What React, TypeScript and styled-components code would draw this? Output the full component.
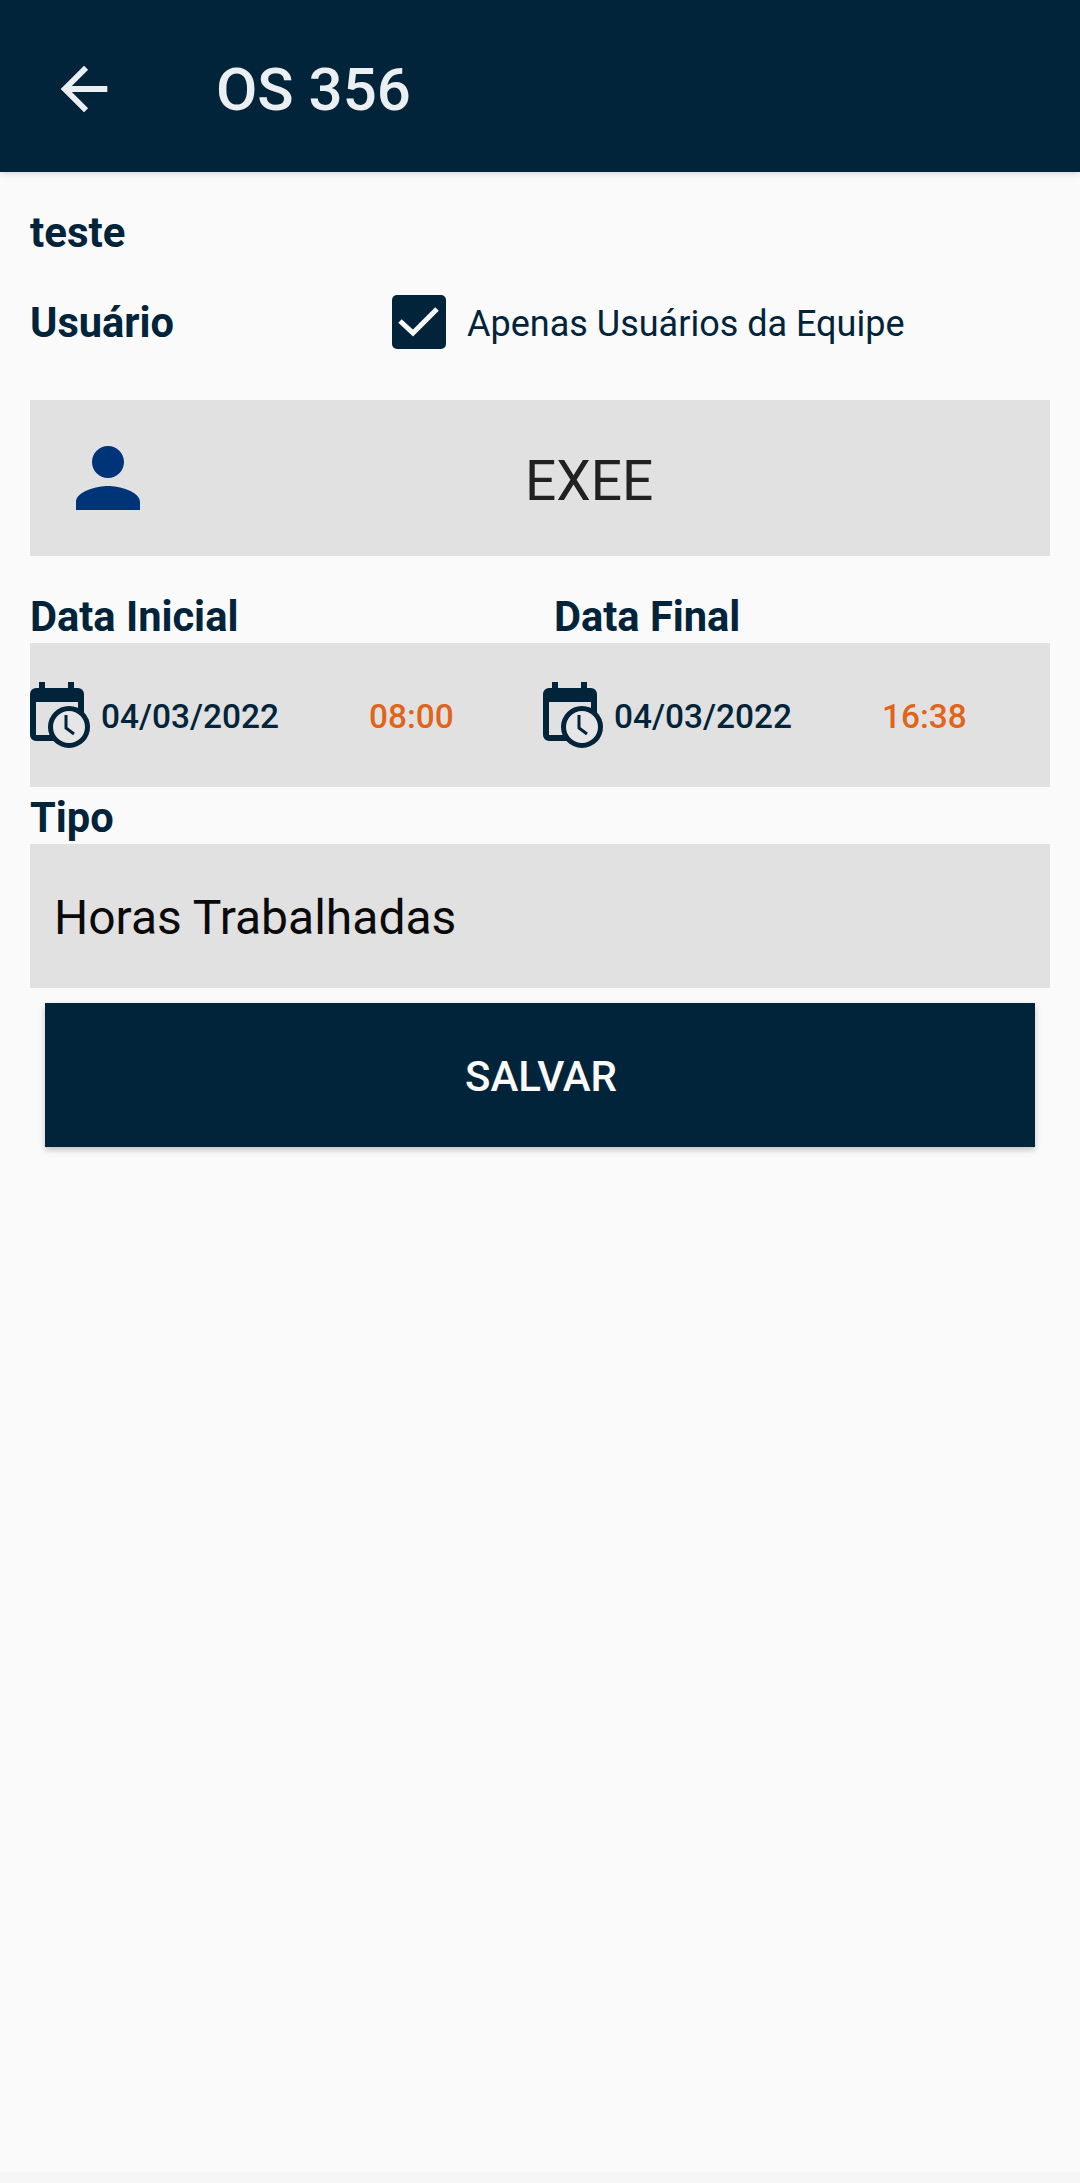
import styled, { createGlobalStyle } from "styled-components";

const NAVY = "#01243a";
const ORANGE = "#e0651b";
const FIELD = "#e1e1e1";

const DATES = [
  { date: "04/03/2022", time: "08:00" },
  { date: "04/03/2022", time: "16:38" },
];

const CalendarClockIcon = () => (
  <IconSvg viewBox="0 0 60 66">
    <path
      d="M9 0h6v6h23V0h6v6h4a6 6 0 0 1 6 6v41a6 6 0 0 1-6 6H6a6 6 0 0 1-6-6V12a6 6 0 0 1 6-6h3zM6 20v33h42V20z"
      fill={NAVY}
      fillRule="evenodd"
    />
    <circle cx="39" cy="45" r="18.5" fill="#e6e6e6" stroke={NAVY} strokeWidth="5" />
    <path d="M36 33v13l8 6" fill="none" stroke={NAVY} strokeWidth="3" />
  </IconSvg>
);

const App = () => {
  return (
    <>
      <GlobalStyle />
      <Page>
        <Header>
          <BackIcon viewBox="0 0 24 24">
            <path d="M20 11H7.83l5.59-5.59L12 4l-8 8 8 8 1.41-1.41L7.83 13H20v-2z" />
          </BackIcon>
          <Title>OS 356</Title>
        </Header>
        <Content>
          <Description>teste</Description>
          <UserRow>
            <Label>Usuário</Label>
            <TeamFilter>
              <CheckBox>
                <svg width="42" height="32" viewBox="0 0 42 32">
                  <path d="M2 15l13 12L39 3" fill="none" stroke="#fafafa" strokeWidth="5" />
                </svg>
              </CheckBox>
              <TeamLabel>Apenas Usuários da Equipe</TeamLabel>
            </TeamFilter>
          </UserRow>
          <UserField>
            <PersonIcon viewBox="0 0 24 24">
              <path d="M12 12c2.21 0 4-1.79 4-4s-1.79-4-4-4-4 1.79-4 4 1.79 4 4 4zm0 2c-2.67 0-8 1.34-8 4v2h16v-2c0-2.66-5.33-4-8-4z" />
            </PersonIcon>
            <UserName>EXEE</UserName>
          </UserField>
          <DateLabels>
            <Label>Data Inicial</Label>
            <Label>Data Final</Label>
          </DateLabels>
          <DateField>
            {DATES.map(item => (
              <DateCell key={item.time}>
                <CalendarClockIcon />
                <DateText>{item.date}</DateText>
                <TimeText>{item.time}</TimeText>
              </DateCell>
            ))}
          </DateField>
          <TypeLabel>Tipo</TypeLabel>
          <TypeField>Horas Trabalhadas</TypeField>
          <SaveButton>SALVAR</SaveButton>
        </Content>
        <BottomStrip />
      </Page>
    </>
  );
};

const GlobalStyle = createGlobalStyle`
  html, body {
    margin: 0;
    padding: 0;
    background: #fafafa;
  }

  * {
    box-sizing: border-box;
  }
`;

const Page = styled.div`
  display: flex;
  flex-direction: column;
  height: 2183px;
  overflow: hidden;
  background: #fafafa;
  font-family: Roboto, "Liberation Sans", sans-serif;
`;

const Header = styled.header`
  display: flex;
  align-items: center;
  height: 172px;
  padding: 6px 0 0 49px;
  background: ${NAVY};
  box-shadow: 0 2px 6px rgba(0, 0, 0, 0.14);
`;

const BackIcon = styled.svg`
  width: 70px;
  height: 70px;
  fill: #eceff1;
`;

const Title = styled.h1`
  margin: 0 0 0 97px;
  font-size: 60px;
  font-weight: 500;
  color: #eceff1;
`;

const Content = styled.main`
  display: flex;
  flex-direction: column;
  padding: 0 30px;
`;

const Description = styled.div`
  height: 106px;
  padding-top: 36px;
  font-size: 42px;
  line-height: 49px;
  font-weight: 700;
  color: ${NAVY};
`;

const UserRow = styled.div`
  display: flex;
  align-items: center;
  height: 88px;
  margin-bottom: 34px;
`;

const Label = styled.div`
  font-size: 41.6px;
  line-height: 49px;
  font-weight: 700;
  color: ${NAVY};
`;

const TeamFilter = styled.div`
  display: flex;
  align-items: center;
  margin-left: 218px;
`;

const CheckBox = styled.div`
  display: flex;
  align-items: center;
  justify-content: center;
  width: 54px;
  height: 54px;
  border-radius: 5px;
  background: ${NAVY};
`;

const TeamLabel = styled.span`
  margin: 3px 0 0 21px;
  font-size: 36px;
  color: ${NAVY};
`;

const UserField = styled.div`
  display: flex;
  align-items: center;
  height: 156px;
  padding-left: 30px;
  background: ${FIELD};
`;

const PersonIcon = styled.svg`
  width: 96px;
  height: 96px;
  fill: #003478;
`;

const UserName = styled.span`
  margin: 5px 0 0 369px;
  font-size: 55px;
  color: #212121;
`;

const DateLabels = styled.div`
  display: grid;
  grid-template-columns: 524px 1fr;
  align-items: end;
  height: 87px;
  padding-bottom: 2px;
`;

const DateField = styled.div`
  display: grid;
  grid-template-columns: 513px 1fr;
  height: 144px;
  background: ${FIELD};
`;

const DateCell = styled.div`
  display: grid;
  grid-template-columns: 71px 268px auto;
  align-items: center;
  justify-content: start;
`;

const IconSvg = styled.svg`
  display: block;
  width: 60px;
  height: 66px;
  filter: blur(0.7px);
`;

const DateText = styled.span`
  font-size: 33.4px;
  font-weight: 500;
  color: ${NAVY};
  padding-top: 2px;
`;

const TimeText = styled.span`
  font-size: 33.4px;
  font-weight: 500;
  color: ${ORANGE};
  padding-top: 2px;
`;

const TypeLabel = styled(Label)`
  display: flex;
  align-items: center;
  height: 57px;
  padding-top: 3px;
`;

const TypeField = styled.div`
  display: flex;
  align-items: center;
  height: 144px;
  padding: 2px 0 0 24px;
  background: ${FIELD};
  font-size: 48px;
  color: #0a0a0a;
`;

const SaveButton = styled.button`
  height: 144px;
  margin: 15px 15px 0;
  padding: 2px 0 0 2px;
  border: 0;
  background: ${NAVY};
  box-shadow: 0 3px 6px rgba(0, 0, 0, 0.22);
  font-family: inherit;
  font-size: 42px;
  font-weight: 500;
  color: #fafafa;
`;

const BottomStrip = styled.div`
  height: 11px;
  margin-top: auto;
  background: #f6f6f6;
`;

export default App;
